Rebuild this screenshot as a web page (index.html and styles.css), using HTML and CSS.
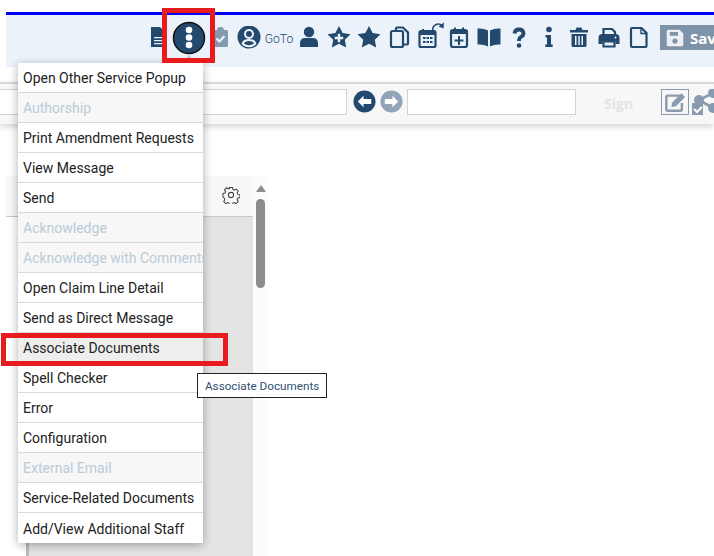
FILE: index.html
```html
<!DOCTYPE html>
<html lang="en">
<head>
<meta charset="utf-8">
<title>Associate Documents</title>
<link rel="stylesheet" href="styles.css">
</head>
<body>
<div class="page">
  <header class="toolbar">
    <span class="slot"><svg class="ico" viewBox="0 0 24 24"><path d="M4 1h9l5 5v15H4z"/><path class="w" d="M7 11h8v1.300H7zM7 14h8v1.300H7zM7 17h8v1.300H7z"/></svg></span>
    <span class="slot"></span>
    <span class="slot"><svg class="ico faded" viewBox="0 0 24 24"><path d="M6 5.500q0-1.500 1.500-1.500H10q0-3 3.500-3T17 4h2.500Q21 4 21 5.500v14q0 1.500-1.500 1.500h-12Q6 21 6 19.500z"/><path class="wl" d="M9.500 12.500l3 3 5-5.500"/></svg></span>
    <span class="slot"><svg class="ico" viewBox="0 0 24 24"><circle cx="12" cy="11" r="11.500"/><circle class="w" cx="12" cy="8" r="5"/><circle cx="12" cy="8" r="3"/><path class="w" d="M4.500 18q1-5 7.500-5t7.500 5q-3 3.200-7.500 3.200T4.500 18z"/><path d="M7 17.500q1-2.500 5-2.500t5 2.500q-2 1.700-5 1.700t-5-1.700z"/></svg></span>
    <span class="slot goto">GoTo</span>
    <span class="slot"><svg class="ico" viewBox="0 0 24 24"><circle cx="12" cy="6" r="5.200"/><path d="M3 21v-3.500Q3 12 8 12h8q5 0 5 5.500V21z"/></svg></span>
    <span class="slot"><svg class="ico" viewBox="0 0 24 24"><path d="M12 0l3.600 7 7.900 1.200-5.700 5.500 1.400 7.800-7.200-3.700-7.200 3.700 1.400-7.800L.5 8.200 8.400 7z"/><path class="w" d="M10.800 7.800h2.400v3h3v2.400h-3v3h-2.400v-3h-3v-2.400h3z"/></svg></span>
    <span class="slot"><svg class="ico" viewBox="0 0 24 24"><path d="M12 0l3.600 7 7.900 1.200-5.700 5.500 1.400 7.800-7.200-3.700-7.200 3.700 1.400-7.800L.5 8.200 8.400 7z"/></svg></span>
    <span class="slot"><svg class="ico" viewBox="0 0 24 24"><path class="ol" d="M9 4V2.500q0-1 1-1h6l5 5v11q0 1-1 1h-4"/><rect class="ol" x="4" y="5" width="12" height="16" rx="1.500"/></svg></span>
    <span class="slot"><svg class="ico over" viewBox="0 0 24 24"><path class="ol" d="M5 5h12q1.500 0 1.500 1.500v13q0 1.500-1.500 1.500H4q-1.500 0-1.500-1.500v-13Q2.500 5 4 5z"/><path d="M2 5h17v4H2zM5 3h2v4H5z"/><path d="M6 11h2.500v2H6zM9.500 11H12v2H9.500zM13 11h2.500v2H13zM6 15h2.500v2H6zM9.500 15H12v2H9.500zM13 15h2.500v2H13z"/><path class="ol thin2" d="M16 5A5.500 5.500 0 0 1 25-.5"/><path d="M27-3.500l-.5 6-5-2z"/></svg></span>
    <span class="slot"><svg class="ico" viewBox="0 0 24 24"><rect class="ol" x="4" y="4" width="16" height="17" rx="2"/><path d="M3.500 4h17v4h-17zM7 1.500h2V6H7zM15 1.500h2V6h-2z"/><path d="M11 10h2v3.500h3.500v2H13V19h-2v-3.500H7.500v-2H11z"/></svg></span>
    <span class="slot"><svg class="ico" viewBox="0 0 24 24"><path d="M11 4.500Q6.500 2 .5 2.500v16q6-.5 10.500 2zM13 4.500Q17.500 2 23.500 2.500v16q-6-.5-10.500 2z"/></svg></span>
    <span class="slot"><svg class="ico" viewBox="0 0 24 24"><path class="ql" d="M7.500 7.500Q8 3.500 12 3.500t4.500 3.500q0 2.500-2.200 3.700T12 14v1"/><circle cx="12" cy="19.500" r="2.300"/></svg></span>
    <span class="slot"><svg class="ico" viewBox="0 0 24 24"><circle cx="12" cy="3.500" r="2.800"/><path d="M8.500 9H14v9.500h1.700V21H8.300v-2.500H10v-7H8.500z"/></svg></span>
    <span class="slot"><svg class="ico" viewBox="0 0 24 24"><path d="M3 4h5.500l1-2.500h5l1 2.500H21v2.500H3z"/><path d="M4.500 8h15v11.500q0 1.500-1.500 1.500H6q-1.500 0-1.500-1.500z"/><path class="w" d="M8 10h1.500v9H8zM11.250 10h1.500v9h-1.500zM14.500 10H16v9h-1.500z"/></svg></span>
    <span class="slot"><svg class="ico" viewBox="0 0 24 24"><path class="ol" d="M6.500 8V3h8.500l3 3v2"/><path d="M1.500 12q0-4 4-4h13q4 0 4 4v6h-4v-3h-13v3h-4z"/><path class="ol" d="M6.500 15.500h11V20.500h-11z"/><circle class="w" cx="18.500" cy="11.500" r="1"/></svg></span>
    <span class="slot"><svg class="ico" viewBox="0 0 24 24"><path class="ol" d="M5 2h9.500l5 5v13q0 1-1 1H5q-1 0-1-1V3q0-1 1-1z"/><path class="ol thin" d="M14 2v5.500h5.500"/></svg></span>
    <button class="save" type="button"><svg class="save-ico" viewBox="0 0 24 24"><path d="M3 1h15l5 5v15q0 2-2 2H3q-2 0-2-2V3q0-2 2-2z"/><path class="save-cut" d="M5 4h11v5H5z"/><circle class="save-cut" cx="12" cy="16" r="3.500"/></svg>Save</button>
  </header>

  <div class="formbar">
    <div class="field first"></div>
    <svg class="nav" viewBox="0 0 24 24"><circle cx="12" cy="12" r="11.500"/><path class="w" d="M5 12l6-6v3.500h8v5h-8V18z"/></svg>
    <svg class="nav off" viewBox="0 0 24 24"><circle cx="12" cy="12" r="11.500"/><path class="w" d="M19 12l-6-6v3.500H5v5h8V18z"/></svg>
    <div class="field second"></div>
    <span class="sign">Sign</span>
    <span class="boxed"><svg viewBox="0 0 26 24"><path class="edit-l" d="M18 5H5q-1.500 0-1.500 1.500v13.500q0 1.500 1.500 1.500h14q1.500 0 1.500-1.500V13"/><path class="edit-f" d="M10 12.500L20 2.500l4 4-10 10-5 1z"/></svg></span>
    <span class="boxed share"><svg viewBox="0 0 26 26"><circle class="edit-f" cx="21" cy="4" r="5"/><circle class="edit-f" cx="21" cy="19" r="5"/><circle class="edit-f" cx="7" cy="11" r="5"/><path class="edit-l" d="M21 4L7 11l14 8"/><path class="edit-f" d="M0 14h11v12H0z"/><path class="check" d="M2 20l3 3 5-5"/></svg></span>
  </div>

  <section class="panel">
    <div class="panel-main">
      <div class="panel-head"><svg class="gear" viewBox="0 0 24 24"><path d="M10 2h4l.6 2.800 1.900.8 2.400-1.500 2.800 2.800-1.500 2.400.8 1.900 2.800.6v4l-2.800.6-.8 1.900 1.500 2.400-2.800 2.800-2.400-1.500-1.900.8-.6 2.800h-4l-.6-2.800-1.900-.8-2.400 1.500-2.800-2.800 1.500-2.400-.8-1.900L1.200 14v-4l2.800-.6.800-1.900-1.500-2.400 2.800-2.800 2.400 1.500 1.900-.8z"/><circle cx="12" cy="12" r="3.500"/></svg></div>
      <div class="panel-body"></div>
    </div>
    <div class="scroll"><span class="scroll-up"></span><span class="scroll-thumb"></span></div>
  </section>

  <span class="caret"></span>
  <nav class="menu">
    <a class="item">Open Other Service Popup</a>
    <a class="item off">Authorship</a>
    <a class="item">Print Amendment Requests</a>
    <a class="item">View Message</a>
    <a class="item">Send</a>
    <a class="item off">Acknowledge</a>
    <a class="item off">Acknowledge with Comments</a>
    <a class="item">Open Claim Line Detail</a>
    <a class="item">Send as Direct Message</a>
    <a class="item hover">Associate Documents</a>
    <a class="item">Spell Checker</a>
    <a class="item">Error</a>
    <a class="item">Configuration</a>
    <a class="item off">External Email</a>
    <a class="item">Service-Related Documents</a>
    <a class="item">Add/View Additional Staff</a>
  </nav>

  <svg class="kebab" viewBox="0 0 34 34"><circle cx="17" cy="17" r="15.500"/><circle class="w" cx="17" cy="9" r="3.300"/><circle class="w" cx="17" cy="16.500" r="3.300"/><circle class="w" cx="17" cy="24" r="3.300"/></svg>
  <div class="mark mark-top"></div>
  <div class="mark mark-item"></div>
  <div class="tip">Associate Documents</div>
</div>
</body>
</html>
```
FILE: styles.css
```css
* { box-sizing: border-box; }
html, body { margin: 0; padding: 0; }
body { background: #fff; font-family: "Roboto", "Liberation Sans", sans-serif; }
.page { position: relative; width: 714px; height: 556px; overflow: hidden; padding: 12px 0 0 6px; display: flex; flex-direction: column; }

.toolbar { height: 55px; flex: none; border-top: 3px solid #0000f5; background: #ebf2fa; display: flex; align-items: flex-start; padding: 8px 0 0 138px; overflow: hidden; }
.slot { width: 30px; height: 30px; flex: none; display: flex; align-items: center; justify-content: center; }
.ico { width: 24px; height: 24px; fill: #234a6e; }
.ico.over { overflow: visible; }
.ico.faded { fill: #8499ae; }
.w { fill: #fff; }
.ico .w { fill: #ebf2fa; }
.wl { fill: none; stroke: #ebf2fa; stroke-width: 2.200; }
.ol { fill: none; stroke: #234a6e; stroke-width: 2.200; }
.ol.thin { stroke-width: 1.400; }
.ol.thin2 { stroke-width: 1.600; }
.ql { fill: none; stroke: #234a6e; stroke-width: 3.800; }
.goto { font-size: 12.200px; color: #234a6e; font-family: "Roboto", sans-serif; font-weight: 300; padding-top: 1px; }
.save { flex: none; margin: 2px 0 0 6px; width: 70px; height: 25px; border: 0; padding: 0 0 0 6px; background: #7f93a8; color: #fff; font: 700 15px "Open Sans", sans-serif; display: flex; align-items: center; gap: 6px; white-space: nowrap; }
.save-ico { width: 18px; height: 18px; fill: #ecf0f4; flex: none; }
.save-cut { fill: #7f93a8; }

.formbar { margin: 15px 0 0 -6px; height: 42px; flex: none; background: #f7f7f7; border-top: 2px solid #d8d8d8; box-shadow: 0 3px 6px rgba(0,0,0,.16); display: flex; align-items: flex-start; padding-top: 5px; overflow: hidden; }
.field { height: 26px; flex: none; background: #fff; border: 1px solid #d3d3d3; }
.field.first { width: 347px; border-left: 0; }
.field.second { width: 169px; margin-left: 4px; }
.nav { width: 23px; height: 23px; flex: none; margin: 1px 0 0 6px; fill: #234a6e; }
.nav + .nav { margin-left: 4px; }
.nav.off { fill: #92a4b8; }
.sign { flex: none; width: 28px; margin: 5px 0 0 28px; font: 700 14px "Open Sans", sans-serif; color: #e4e4e4; }
.boxed { width: 28px; height: 26px; flex: none; margin-left: 29px; border: 1.500px solid #8a9bb0; display: flex; align-items: center; justify-content: center; }
.boxed svg { width: 24px; height: 22px; }
.boxed.share { margin-left: 4px; border: 0; width: 24px; margin-right: -4px; }
.boxed.share svg { width: 26px; height: 26px; flex: none; }
.edit-l { fill: none; stroke: #8a9bb0; stroke-width: 2.600; }
.edit-f { fill: #8a9bb0; }
.check { fill: none; stroke: #fff; stroke-width: 2; }

.panel { margin-top: 52px; flex: 1; width: 262px; display: flex; min-height: 0; }
.panel-main { width: 247px; flex: none; display: flex; flex-direction: column; }
.panel-head { height: 41px; flex: none; background: #f8f8f8; border-bottom: 1px solid #c8c8c8; display: flex; justify-content: flex-end; padding: 10px 13px 0 0; }
.gear { width: 18px; height: 18px; fill: none; stroke: #444; stroke-width: 1.400; }
.panel-body { flex: 1; margin-left: 20px; background: #e4e4e4; border-left: 3px solid #bdbdbd; }
.scroll { width: 15px; flex: none; background: #fcfcfc; display: flex; flex-direction: column; align-items: center; padding-top: 9px; gap: 7px; }
.scroll-up { width: 0; height: 0; border: 5px solid transparent; border-top: 0; border-bottom: 7px solid #8c8c8c; flex: none; }
.scroll-thumb { width: 9px; height: 89px; border-radius: 5px; background: #8c8c8c; flex: none; }

.menu { position: absolute; left: 18px; top: 63px; width: 185px; background: #fff; box-shadow: 0 2px 9px rgba(0,0,0,.32); display: flex; flex-direction: column; }
.item { height: 30px; flex: none; padding: 1px 0 0 5px; display: flex; align-items: center; font-size: 14px; color: #222; border-bottom: 1px solid #d9d9d9; white-space: nowrap; overflow: hidden; }
.item:last-child { border-bottom: 0; }
.item.off { background: #f7f7f7; color: #b9cbd8; }
.item.hover { background: #eee; }
.caret { position: absolute; left: 184px; top: 55px; width: 0; height: 0; border: 5px solid transparent; border-top: 0; border-bottom: 6px solid #c4ccd4; }

.kebab { position: absolute; left: 172px; top: 21px; width: 34px; height: 34px; }
.kebab circle { fill: #234a6e; stroke: #111; stroke-width: 1.500; }
.kebab circle.w { fill: #fff; stroke: none; }
.mark { position: absolute; border: 5px solid #e81c1f; }
.mark-top { left: 162px; top: 8px; width: 53px; height: 55px; }
.mark-item { left: 1px; top: 333px; width: 227px; height: 33px; }
.tip { position: absolute; left: 197px; top: 373px; width: 130px; height: 25px; border: 1px solid #222; background: #fff; color: #2f4f73; font-size: 11.700px; display: flex; align-items: center; padding-left: 7px; white-space: nowrap; }
```
